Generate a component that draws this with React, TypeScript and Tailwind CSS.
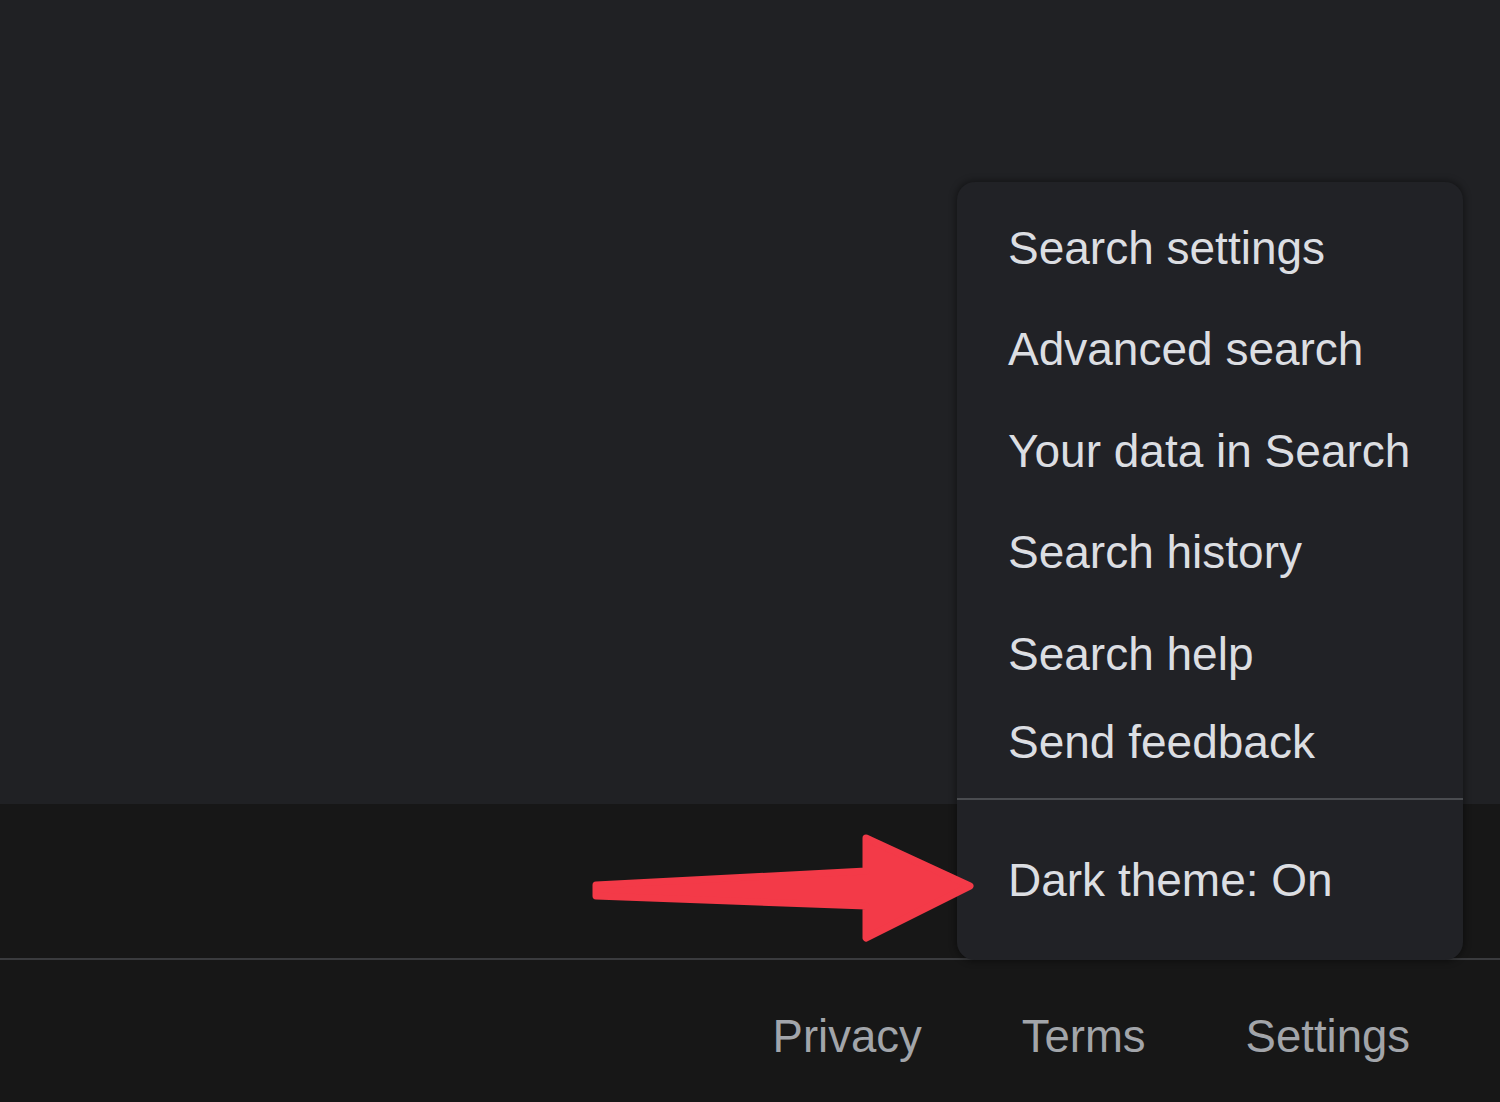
const menuItems = ["Search settings", "Advanced search", "Your data in Search", "Search history", "Search help"]

const footerLinks = ["Privacy", "Terms", "Settings"]

export default function App() {
  return (
    <div className="relative h-[1102px] w-[1500px] overflow-hidden bg-[#171717] font-['Liberation_Sans',Arial,sans-serif]">
      {/* page body */}
      <div className="h-[804px] bg-[#202124]"></div>
      <div className="h-[154px] bg-[#171717]"></div>
      <footer className="flex h-[144px] items-center justify-end gap-[100px] border-t-2 border-[#3a3b3e] bg-[#171717] pr-[90px] pt-[12px]">
        {footerLinks.map((link) => (
          <a key={link} className="text-[45.5px] leading-none text-[#a2a5aa]">
            {link}
          </a>
        ))}
      </footer>

      {/* settings menu */}
      <div className="absolute left-[957px] top-[182px] flex h-[778px] w-[506px] flex-col rounded-[18px] bg-[#212226] pt-[15px] shadow-[0_0_6px_2px_rgba(0,0,0,0.35)]">
        {menuItems.map((item) => (
          <div key={item} className="flex h-[101.5px] shrink-0 items-center pl-[51px] text-[46px] leading-none text-[#dcdee2]">
            {item}
          </div>
        ))}
        <div className="flex h-[74px] shrink-0 items-center pl-[51px] text-[46px] leading-none text-[#dcdee2]">Send feedback</div>
        <div className="mt-[19px] h-[2px] shrink-0 bg-[#4a4c50]"></div>
        <div className="flex flex-1 items-center pl-[51px] text-[46px] leading-none text-[#dcdee2]">Dark theme: On</div>
      </div>

      {/* annotation arrow */}
      <svg className="absolute left-[585px] top-[828px]" width="400" height="122" viewBox="585 828 400 122">
        <path
          d="M596 885 L866 871 L866 838 L970 886 L866 938 L866 906 L596 896 Z"
          fill="#f33a48"
          stroke="#f33a48"
          strokeWidth="7"
          strokeLinejoin="round"
        />
      </svg>
    </div>
  )
}
